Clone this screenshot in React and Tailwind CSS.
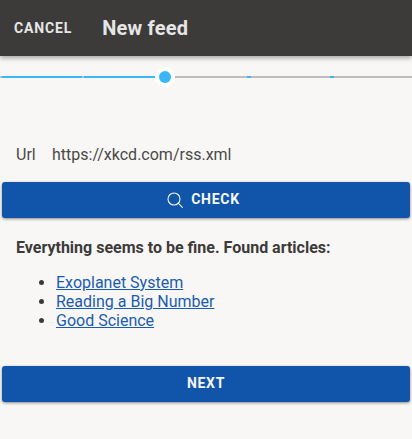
import React from "react";

const articles = ["Exoplanet System", "Reading a Big Number", "Good Science"];

const SearchIcon = () => (
  <svg width="16" height="16" viewBox="0 0 16 16" fill="none" stroke="currentColor" strokeWidth="1.1" strokeLinecap="round">
    <circle cx="7" cy="7" r="6" />
    <path d="M11.2 11.2 L15.4 15.4" />
  </svg>
);

const Stepper = () => (
  <div className="mt-[12px] flex h-[18px] items-center">
    <div className="h-[2px] w-[2px] bg-[#bdbdbd]" />
    <div className="h-[2px] w-[80px] bg-[#38b6f8]" />
    <div className="h-[2px] w-[2px] bg-[#bdbdbd]" />
    <div className="h-[2px] w-[71px] bg-[#38b6f8]" />
    <div className="flex h-[20px] w-[20px] shrink-0 items-center justify-center rounded-full bg-white">
      <div className="h-[12px] w-[12px] rounded-full bg-[#38b6f8]" />
    </div>
    <div className="h-[2px] w-[72px] bg-[#bdbdbd]" />
    <div className="h-[2px] w-[4px] bg-[#38b6f8]" />
    <div className="h-[2px] w-[79px] bg-[#bdbdbd]" />
    <div className="h-[2px] w-[4px] bg-[#38b6f8]" />
    <div className="h-[2px] flex-1 bg-[#bdbdbd]" />
  </div>
);

const ActionButton = ({ children, className = "" }) => (
  <button className={`mx-[2px] flex h-[36px] w-[408px] items-center justify-center rounded-[3px] bg-[#1155aa] pb-[1px] text-[14px] font-bold tracking-[0.7px] text-[#f5f5f5] shadow-[0_1px_3px_rgba(0,0,0,0.45)] ${className}`}>
    {children}
  </button>
);

export default function App() {
  return (
    <div className="h-[439px] w-[412px] overflow-hidden bg-[#f9f7f6] font-['Roboto',sans-serif] text-[#3c3b39]">
      <header className="relative flex h-[56px] items-center bg-[#3c3b39] text-[#e6e6e6] shadow-[0_2px_5px_rgba(0,0,0,0.35)]">
        <span className="ml-[14px] text-[14px] font-bold tracking-[0.85px]">CANCEL</span>
        <h1 className="ml-[30px] text-[20px] font-bold tracking-[0.2px]">New feed</h1>
      </header>

      <Stepper />

      <div className="mt-[57px] flex h-[24px] items-center px-[16px] text-[16px] text-[#4a4947]">
        <span className="w-[36px]">Url</span>
        <span>https://xkcd.com/rss.xml</span>
      </div>

      <ActionButton className="mt-[15px]">
        <SearchIcon />
        <span className="ml-[8px] mr-[5px]">CHECK</span>
      </ActionButton>

      <p className="mt-[18px] px-[16px] text-[16px] font-bold leading-[24px]">
        Everything seems to be fine. Found articles:
      </p>

      <ul className="mt-[13px] list-disc pl-[56px] text-[16px] leading-[19px]">
        {articles.map((title) => (
          <li key={title}>
            <a href="#" className="text-[#1a5cb0] underline">{title}</a>
          </li>
        ))}
      </ul>

      <ActionButton className="mt-[36px]">NEXT</ActionButton>
    </div>
  );
}
